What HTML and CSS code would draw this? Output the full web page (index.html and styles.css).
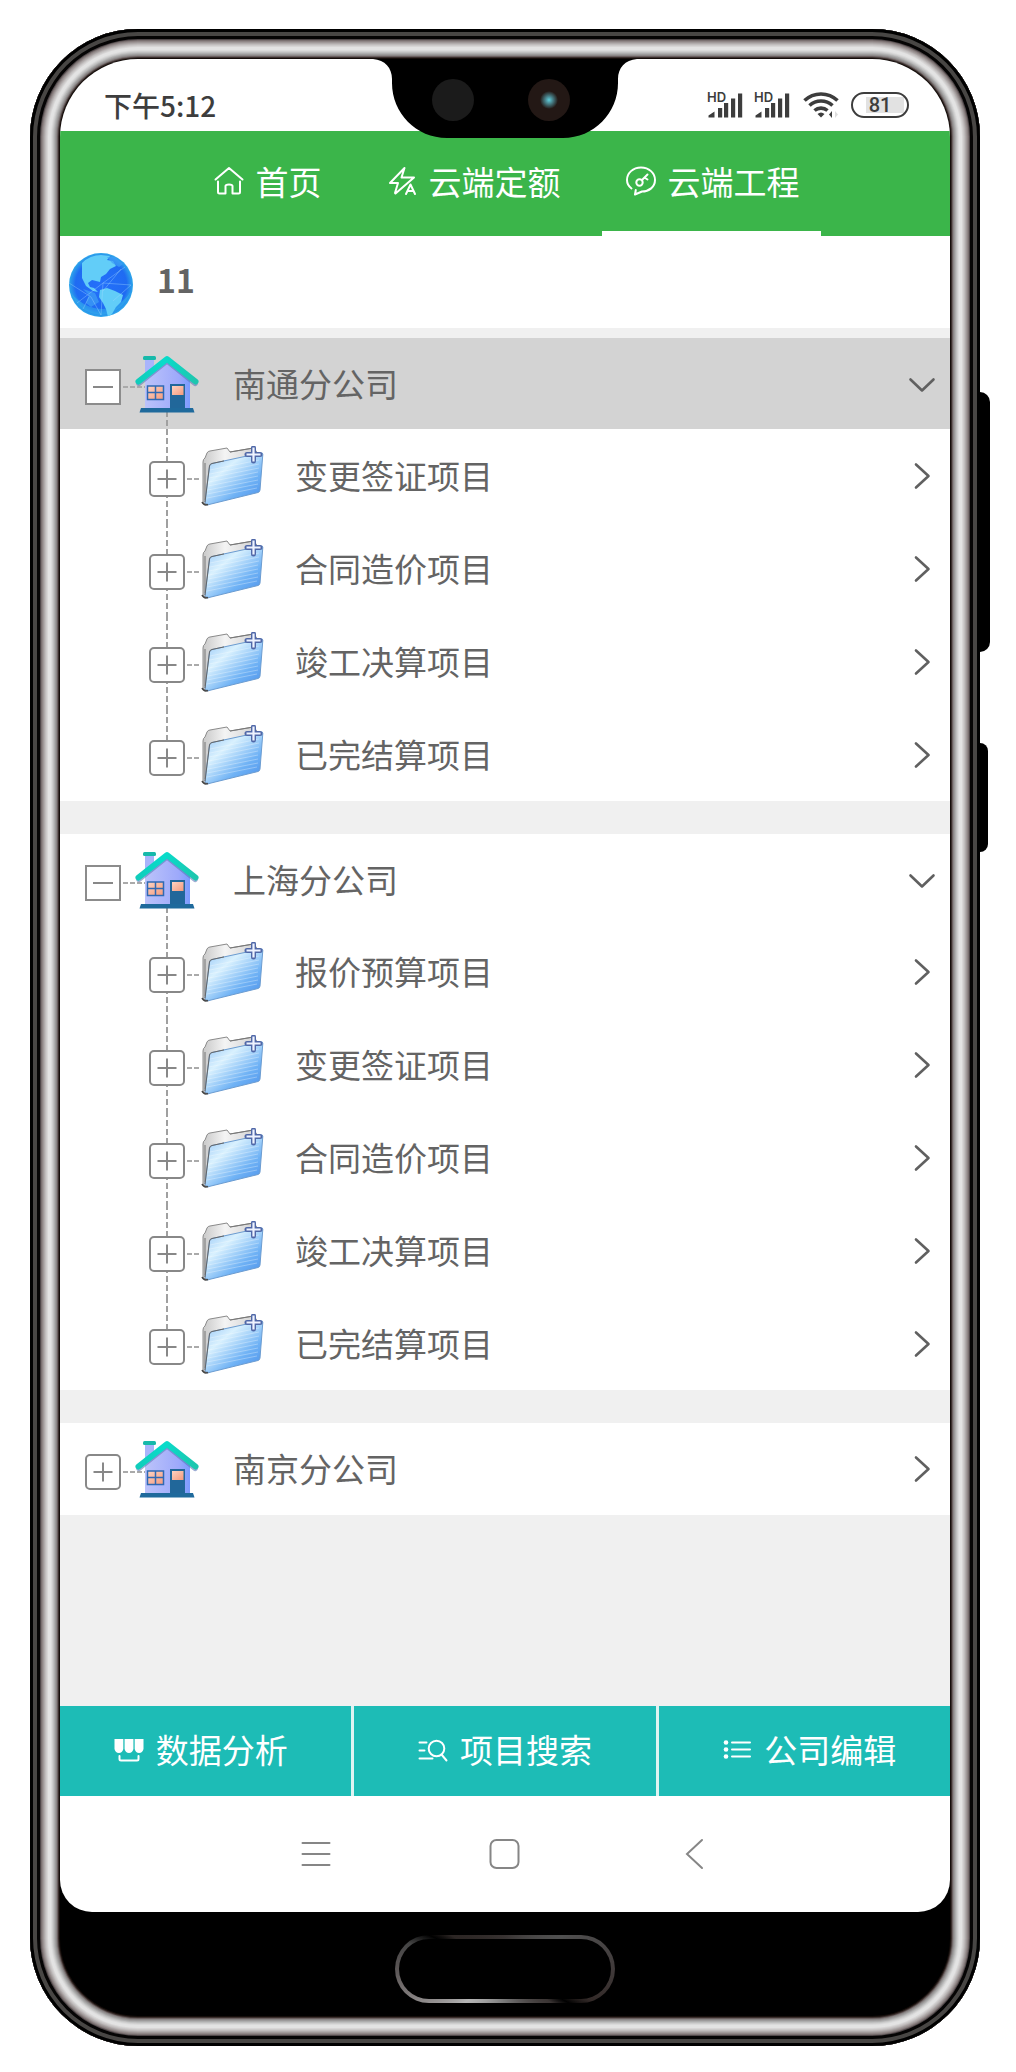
FILE: index.html
```html
<!DOCTYPE html>
<html lang="zh-CN">
<head>
<meta charset="utf-8">
<meta name="viewport" content="width=device-width, initial-scale=1">
<title>云端工程</title>
<link rel="stylesheet" href="styles.css">
</head>
<body>
<svg class="defs" aria-hidden="true">
  <defs>
    <linearGradient id="wall" x1="0" x2="1"><stop offset="0" stop-color="#bcc3fa"/><stop offset=".75" stop-color="#9da9fb"/><stop offset="1" stop-color="#7a9bff"/></linearGradient>
    <linearGradient id="roof" x1="0" x2="1"><stop offset="0" stop-color="#10cdbb"/><stop offset=".45" stop-color="#08dccb"/><stop offset="1" stop-color="#1ec6ae"/></linearGradient>
    <linearGradient id="pane" x1="0" y1="0" x2="1" y2="1"><stop offset="0" stop-color="#fdd3c2"/><stop offset="1" stop-color="#f59a7c"/></linearGradient>
    <linearGradient id="folderFront" x1="0" y1="0" x2=".9" y2="1"><stop offset="0" stop-color="#8ec1f6"/><stop offset=".35" stop-color="#d9f1fe"/><stop offset=".7" stop-color="#6fb2f5"/><stop offset="1" stop-color="#4b90ea"/></linearGradient>
    <linearGradient id="folderBack" x1="0" y1="0" x2="1" y2="0"><stop offset="0" stop-color="#c9c9c9"/><stop offset=".4" stop-color="#f4f4f4"/><stop offset="1" stop-color="#cfcfcf"/></linearGradient>
    <radialGradient id="ocean" cx=".5" cy=".5" r=".5"><stop offset="0" stop-color="#2470fb"/><stop offset=".8" stop-color="#1f6bf2"/><stop offset="1" stop-color="#2ea7ea"/></radialGradient>
    <radialGradient id="lens"><stop offset="0" stop-color="#5fd0dc"/><stop offset=".35" stop-color="#4c8d97"/><stop offset="1" stop-color="#231815"/></radialGradient>
    <clipPath id="globeClip"><circle cx="32" cy="32" r="32"/></clipPath>
  </defs>
  <symbol id="i-plus" viewBox="0 0 36 36"><rect x="1" y="1" width="34" height="34" rx="4" fill="#fff" stroke="#888" stroke-width="2"/><path d="M8.500 18h19M18 8.500v19" stroke="#888" stroke-width="2" fill="none"/></symbol>
  <symbol id="i-minus" viewBox="0 0 36 36"><rect x="1" y="1" width="34" height="34" fill="#fff" stroke="#8c8c8c" stroke-width="2"/><path d="M8 18h20" stroke="#888" stroke-width="2" fill="none"/></symbol>
  <symbol id="i-house" viewBox="0 0 64 58">
    <rect x="10" y="3" width="9" height="16" fill="#a9b4fb"/>
    <path d="M10 25 32 6l23 19v29H10z" fill="url(#wall)"/>
    <rect x="8" y="1" width="13" height="4" rx="1.500" fill="#17b9aa"/>
    <path d="M4 28 32 5.500 60 28" fill="none" stroke="#5f78b8" stroke-width="6" stroke-linecap="round" stroke-linejoin="round" opacity=".6"/>
    <path d="M3.500 26.500 32 4l28.500 22.500" fill="none" stroke="url(#roof)" stroke-width="6" stroke-linecap="round" stroke-linejoin="round"/>
    <rect x="12.500" y="31" width="16" height="13.500" fill="url(#pane)" stroke="#2f69b4" stroke-width="1.500"/>
    <path d="M20.500 31v13.500M12.500 37.500h16" stroke="#2f69b4" stroke-width="1.500"/>
    <rect x="35" y="29" width="15" height="25" fill="#21679a"/>
    <rect x="37" y="31" width="11.500" height="9" fill="url(#pane)"/>
    <path d="M6 53h52l1.500 4.500H4.500z" fill="#1f6a9c"/>
  </symbol>
  <symbol id="i-folder" viewBox="0 0 64 60">
    <path d="M2 57V16q0-3 2-4l2-5q1-2 3-2l17-3 3 4 24-4 4 6-4 35L6 58z" fill="url(#folderBack)" stroke="#8a8a8a" stroke-width="1"/>
    <path d="M4 54V17M29 6l23-4" stroke="#777" stroke-width="1" fill="none"/>
    <path d="M4 56 8.500 20q.4-2 2.500-2.500L60 7q2-.4 1.800 1.500L59 44q-.2 2-2 2.500L6 59z" fill="url(#folderFront)" stroke="#6c9cd0" stroke-width="1"/>
    <path d="M9 24 58 14M9 28 58 18M8 32 58 22M8 36 57 26M7 40 57 30M7 44 57 34M6 48 57 38M6 52 56 42" stroke="#fff" stroke-width="1" opacity=".3" fill="none"/>
    <path d="M4 56 8.500 20q.4-2 2.500-2.500l12-2.600" fill="none" stroke="#666" stroke-width="1"/>
    <path d="M1 56q2 4 6 2.500" fill="none" stroke="#444" stroke-width="1.500"/>
    <path d="M52.500 2v13M46 8.500h13" stroke="#5068a8" stroke-width="5" stroke-linecap="round"/>
    <path d="M52.500 1.500v14M45.500 8.500h14" stroke="#eef3ff" stroke-width="2.200"/>
  </symbol>
  <symbol id="i-right" viewBox="0 0 28 28"><path d="m8 2.500 12.500 11.500L8 25.500" fill="none" stroke="#606060" stroke-width="2.600" stroke-linecap="round" stroke-linejoin="round"/></symbol>
  <symbol id="i-down" viewBox="0 0 28 28"><path d="m2.500 9.500 11.500 11L25.500 9.500" fill="none" stroke="#606060" stroke-width="2.600" stroke-linecap="round" stroke-linejoin="round"/></symbol>
  <symbol id="i-signal" viewBox="0 0 37 26"><path d="M1.500 25.500V23.500l6-4v6zM11 16h4.200v9.500H11zM17 11h4.200v14.500H17zM24 6.500h4.200v19H24zM31 1.500h4.200v24H31z" fill="#3d3d3d"/></symbol>
</svg>

<div class="phone">
  <span class="side-key side-key-volume"></span>
  <span class="side-key side-key-power"></span>
  <div class="screen">
    <div class="status">
      <time class="clock">下午5:12</time>
      <svg class="notch" viewBox="0 0 264 79" aria-hidden="true">
        <path d="M0 0C12 1 19 9 19 20v4c0 30 24 55 55 55h116c31 0 55-25 55-55v-4c0-11 7-19 19-20z" fill="#000"/>
        <circle cx="80" cy="41" r="21" fill="#1b1b1b"/>
        <circle cx="176" cy="41" r="21" fill="#231815"/>
        <circle cx="176" cy="41" r="9" fill="url(#lens)"/>
      </svg>
      <div class="indicators">
        <span class="sim"><b>HD</b><svg><use href="#i-signal"/></svg></span>
        <span class="sim"><b>HD</b><svg><use href="#i-signal"/></svg></span>
        <svg class="wifi" viewBox="0 0 36 28" fill="none" stroke="#3d3d3d" stroke-width="3.600" aria-hidden="true"><path d="M1.500 9.500a24 24 0 0 1 33 0M6.500 14.500a17 17 0 0 1 23 0M11.500 19.500a10 10 0 0 1 13 0"/><path d="M14.500 23q3.500-3 7 0L18 26.500z" fill="#3d3d3d" stroke="none"/><path d="M29 20v7l-3-3.500z" fill="#3d3d3d" stroke="none"/><path d="M32 20v7l3-3.500z" fill="#ddd" stroke="none"/></svg>
        <span class="battery">81</span>
      </div>
    </div>

    <nav class="tabs">
      <a class="tab" href="#home"><svg viewBox="0 0 30 30"><path d="M1.500 13.500 15 2l13.500 11.500M4 15.500V26q0 1.500 1.500 1.500h6V20q0-1.500 3.500-1.500t3.500 1.500v7.500h6q1.500 0 1.500-1.500V15.500"/></svg>首页</a>
      <a class="tab" href="#quota"><svg viewBox="0 0 30 30"><path d="M17.500 2 3 17h8L8 27M17.500 11.500 27 11.500 8.500 27.500M17.500 2 14.500 11.500h3M19 28l4.500-9.500L28 28M21 25h5"/></svg>云端定额</a>
      <a class="tab tab-active" href="#project" aria-current="page"><svg viewBox="0 0 30 30"><path d="M5.500 22.500C2.800 20.500 1 17.500 1 14 1 7 7 1.500 15 1.500S29 7 29 14s-6 11.500-13 11.500l-7 3 .8-4.500"/><circle cx="13.500" cy="16.500" r="3.200"/><path d="m16 14 5.500-5.500M18.500 11.500l3 2"/></svg>云端工程</a>
    </nav>

    <header class="account">
      <svg class="globe" viewBox="0 0 64 64" aria-hidden="true">
        <circle cx="32" cy="32" r="32" fill="url(#ocean)"/>
        <g clip-path="url(#globeClip)">
          <path d="M2 40q8 20 30 22 22-2 30-24-10 16-28 18Q16 56 2 40z" fill="#36b6ec" opacity=".5"/>
          <path d="M13 10q8-8 19-8l9 1-3 4 6 1 3 5-6 3-4 5-5 3-1 5-4-1-4-1-4 3 2 4 4 1 4 4-5-1-7-5-4-8z" fill="#62cdf8"/>
          <path d="M31 37l7-2 8 3 8 4-2 7-5 5-4 7-4 3-2-8-3-6-4-6z" fill="#62cdf8"/>
          <path d="M38 4l8 0 8 7-4 3-7-4zM14 36l6 6-3 8 5 4 8-5-4-9z" fill="#3f9ff5" opacity=".7"/>
          <path d="M0 30 22 44 32 62 34 30 62 32 44 48M8 50l26-20L56 14M34 38l18-22M20 44l-6 12" stroke="#a8dcff" stroke-width=".6" fill="none" opacity=".6"/>
        </g>
      </svg>
      <h1 class="account-name">11</h1>
    </header>

    <main class="tree">
      <section class="company">
        <div class="row row-company row-open row-selected">
          <button class="toggle" aria-label="收起" aria-expanded="true"><svg><use href="#i-minus"/></svg></button><span class="link"></span>
          <svg class="house"><use href="#i-house"/></svg><span class="label">南通分公司</span><svg class="chevron"><use href="#i-down"/></svg>
        </div>
        <ul class="projects">
          <li class="row row-project"><button class="toggle" aria-label="展开" aria-expanded="false"><svg><use href="#i-plus"/></svg></button><span class="link"></span><svg class="folder"><use href="#i-folder"/></svg><span class="label">变更签证项目</span><svg class="chevron"><use href="#i-right"/></svg></li>
          <li class="row row-project"><button class="toggle" aria-label="展开" aria-expanded="false"><svg><use href="#i-plus"/></svg></button><span class="link"></span><svg class="folder"><use href="#i-folder"/></svg><span class="label">合同造价项目</span><svg class="chevron"><use href="#i-right"/></svg></li>
          <li class="row row-project"><button class="toggle" aria-label="展开" aria-expanded="false"><svg><use href="#i-plus"/></svg></button><span class="link"></span><svg class="folder"><use href="#i-folder"/></svg><span class="label">竣工决算项目</span><svg class="chevron"><use href="#i-right"/></svg></li>
          <li class="row row-project"><button class="toggle" aria-label="展开" aria-expanded="false"><svg><use href="#i-plus"/></svg></button><span class="link"></span><svg class="folder"><use href="#i-folder"/></svg><span class="label">已完结算项目</span><svg class="chevron"><use href="#i-right"/></svg></li>
        </ul>
      </section>

      <section class="company">
        <div class="row row-company row-open">
          <button class="toggle" aria-label="收起" aria-expanded="true"><svg><use href="#i-minus"/></svg></button><span class="link"></span>
          <svg class="house"><use href="#i-house"/></svg><span class="label">上海分公司</span><svg class="chevron"><use href="#i-down"/></svg>
        </div>
        <ul class="projects">
          <li class="row row-project"><button class="toggle" aria-label="展开" aria-expanded="false"><svg><use href="#i-plus"/></svg></button><span class="link"></span><svg class="folder"><use href="#i-folder"/></svg><span class="label">报价预算项目</span><svg class="chevron"><use href="#i-right"/></svg></li>
          <li class="row row-project"><button class="toggle" aria-label="展开" aria-expanded="false"><svg><use href="#i-plus"/></svg></button><span class="link"></span><svg class="folder"><use href="#i-folder"/></svg><span class="label">变更签证项目</span><svg class="chevron"><use href="#i-right"/></svg></li>
          <li class="row row-project"><button class="toggle" aria-label="展开" aria-expanded="false"><svg><use href="#i-plus"/></svg></button><span class="link"></span><svg class="folder"><use href="#i-folder"/></svg><span class="label">合同造价项目</span><svg class="chevron"><use href="#i-right"/></svg></li>
          <li class="row row-project"><button class="toggle" aria-label="展开" aria-expanded="false"><svg><use href="#i-plus"/></svg></button><span class="link"></span><svg class="folder"><use href="#i-folder"/></svg><span class="label">竣工决算项目</span><svg class="chevron"><use href="#i-right"/></svg></li>
          <li class="row row-project"><button class="toggle" aria-label="展开" aria-expanded="false"><svg><use href="#i-plus"/></svg></button><span class="link"></span><svg class="folder"><use href="#i-folder"/></svg><span class="label">已完结算项目</span><svg class="chevron"><use href="#i-right"/></svg></li>
        </ul>
      </section>

      <section class="company">
        <div class="row row-company">
          <button class="toggle" aria-label="展开" aria-expanded="false"><svg><use href="#i-plus"/></svg></button><span class="link"></span>
          <svg class="house"><use href="#i-house"/></svg><span class="label">南京分公司</span><svg class="chevron"><use href="#i-right"/></svg>
        </div>
      </section>
    </main>

    <div class="actions">
      <button class="action"><svg viewBox="0 0 30 30"><path d="M.5 5h8.800v10q-1 4-4.400 4T.5 15zM10.600 5h8.800v10q-1 4-4.400 4t-4.400-4zM20.700 5h8.800v10q-1 4-4.400 4t-4.400-4z" fill="#fff" stroke="none"/><path d="M5.500 22v3q0 1.500 1.500 1.500h16q1.500 0 1.500-1.500v-3"/></svg>数据分析</button>
      <button class="action"><svg viewBox="0 0 30 30"><circle cx="18.500" cy="14.500" r="7.800"/><path d="m23.500 20.500 5 6M1.500 8.500h7M1.500 16.500h5M1.500 24.500h13"/></svg>项目搜索</button>
      <button class="action"><svg viewBox="0 0 30 30"><path d="M10 8.500h18M10 15.500h18M10 22.500h18"/><g fill="#fff" stroke="none"><circle cx="4" cy="8.500" r="2.300"/><circle cx="4" cy="15.500" r="2.300"/><circle cx="4" cy="22.500" r="2.300"/></g></svg>公司编辑</button>
    </div>

    <div class="system-nav">
      <button class="system-key" aria-label="菜单"><svg viewBox="0 0 32 32"><path d="M2.500 5h27M2.500 16h27M2.500 27h27"/></svg></button>
      <button class="system-key" aria-label="主页"><svg viewBox="0 0 32 32"><rect x="1.500" y="2" width="28" height="28" rx="6"/></svg></button>
      <button class="system-key" aria-label="返回"><svg viewBox="0 0 32 32"><path d="M24 2 9 16l15 14"/></svg></button>
    </div>
  </div>
  <div class="chin"><button class="home-key" aria-label="主屏幕"></button></div>
</div>
</body>
</html>
```

FILE: styles.css
```css
* { box-sizing: border-box; }

body {
  margin: 0;
  padding: 29px 36px 26px 30px;
  min-height: 100vh;
  display: flex;
  flex-direction: column;
  background: #fff;
  color: #646464;
  font-family: "Noto Sans CJK SC", "Noto Sans", sans-serif;
  font-size: 33px;
  line-height: 48px;
}

button {
  padding: 0;
  border: 0;
  background: none;
  color: inherit;
  font: inherit;
  cursor: pointer;
}

svg { display: block; flex: none; }
.defs { position: absolute; width: 0; height: 0; }

/* Metal frame: concentric rings from the outer edge inwards */
.phone {
  position: relative;
  flex: 1;
  display: flex;
  flex-direction: column;
  padding: 30px;
  border-radius: 108px;
  background: #000;
  box-shadow:
    inset 0 0 0 3px #000,
    inset 0 0 0 7px #484644,
    inset 0 0 0 10px #050404,
    inset 0 0 0 11px #50484a,
    inset 0 0 0 12px #7a7070,
    inset 0 0 0 13px #8f8686,
    inset 0 0 0 14px #a09999,
    inset 0 0 0 15px #b0abab,
    inset 0 0 0 16px #c0bcbc,
    inset 0 0 0 17px #cccaca,
    inset 0 0 0 18px #d8d6d6,
    inset 0 0 0 21px #e3e3e3,
    inset 0 0 0 22px #dadada,
    inset 0 0 0 23px #cdcdcd,
    inset 0 0 0 24px #bebebe,
    inset 0 0 0 25px #adadad,
    inset 0 0 0 26px #9c9a9a,
    inset 0 0 0 27px #8a8686,
    inset 0 0 0 28px #6b6060,
    inset 0 0 0 29px #3a2f2d,
    inset 0 0 0 30px #150d0a;
}

.side-key {
  position: absolute;
  left: 100%;
  background: #000;
}
.side-key-volume { top: 363px; width: 10px; height: 260px; border-radius: 0 10px 10px 0; }
.side-key-power { top: 714px; width: 8px; height: 109px; border-radius: 0 8px 8px 0; }

.screen {
  flex: 1;
  display: flex;
  flex-direction: column;
  overflow: hidden;
  border-radius: 78px 78px 32px 32px;
  background: #fff;
}

/* Status bar */
.status {
  position: relative;
  display: flex;
  justify-content: space-between;
  align-items: center;
  height: 72px;
  padding: 20px 41px 0 44px;
  color: #3d3d3d;
}
.clock { font-size: 28px; line-height: 32px; font-weight: 500; }
.notch {
  position: absolute;
  top: 0;
  left: 0;
  right: 0;
  z-index: 1;
  width: 264px;
  height: 79px;
  margin: 0 auto;
}
.indicators { display: flex; align-items: center; gap: 12px; }
.sim { position: relative; width: 37px; height: 26px; margin-right: -2px; }
.sim svg { width: 37px; height: 26px; }
.sim b {
  position: absolute;
  top: 0;
  left: 0;
  font: 600 13px/10px Inter, "Liberation Sans", sans-serif;
}
.wifi { width: 36px; height: 28px; margin-left: 2px; }
.battery {
  width: 58px;
  height: 26px;
  border: 2px solid #3d3d3d;
  border-radius: 13px;
  background: linear-gradient(#e2e2e2, #e2e2e2) 13px 3px / 38px 16px no-repeat;
  font: 500 20px/22px Roboto, "Liberation Sans", sans-serif;
  text-align: center;
}

/* Top tabs */
.tabs {
  display: flex;
  justify-content: center;
  gap: 20px;
  height: 105px;
  background: #3bb54a;
}
.tab {
  display: flex;
  align-items: center;
  gap: 12px;
  padding: 0 21px 0 24px;
  border-bottom: 5px solid transparent;
  color: #fff;
  text-decoration: none;
}
.tab-active { border-bottom-color: #fff; }
.tab svg, .action svg {
  width: 30px;
  height: 30px;
  fill: none;
  stroke: #fff;
  stroke-width: 2;
  stroke-linecap: round;
  stroke-linejoin: round;
}

/* Account line */
.account {
  display: flex;
  align-items: center;
  gap: 24px;
  height: 92px;
  padding: 6px 9px 0;
}
.globe { width: 64px; height: 64px; }
.account-name { margin: 0 0 12px; font-size: 32px; line-height: 48px; font-weight: 700; }

/* Company tree */
.tree {
  flex: 1;
  display: flex;
  flex-direction: column;
  gap: 33px;
  padding-top: 10px;
  background: #f0f0f0;
}
.company { background: #fff; }
.projects { margin: 0; padding: 0; list-style: none; }
.row { display: flex; align-items: center; padding-right: 14px; }
.row-company { height: 92px; padding-left: 25px; }
.row-open { height: 91px; }
.row-project {
  height: 93px;
  padding-left: 89px;
  background: repeating-linear-gradient(#a0a0a0 0 6px, transparent 6px 9px) 106px 0 / 2px 100% no-repeat;
}
.row-project:last-child { background-size: 2px 50%; }
.row-open { background: repeating-linear-gradient(#a0a0a0 0 6px, transparent 6px 9px) 106px 100% / 2px 18px no-repeat; }
.row-selected { background-color: #d3d3d3; }
.toggle { width: 36px; height: 36px; margin-top: 6px; flex: none; }
.toggle svg { width: 36px; height: 36px; }
.link {
  width: 16px;
  height: 2px;
  margin-top: 6px;
  background: repeating-linear-gradient(90deg, transparent 0 2px, #aaa 2px 7px);
}
.row-company .link { width: 24px; margin-right: -10px; }
.house { width: 64px; height: 58px; }
.folder { width: 64px; height: 60px; }
.label { flex: 1; margin: 0 0 2px 30px; }
.row-company .label { margin-left: 34px; }
.chevron { width: 28px; height: 28px; }

/* Bottom actions: three equal cells bleeding past the screen edges */
.actions {
  display: grid;
  grid-template-columns: repeat(3, 1fr);
  gap: 3px;
  height: 90px;
  margin: 0 -10px;
  background: #dff3f2;
}
.action {
  display: flex;
  align-items: center;
  justify-content: center;
  gap: 12px;
  padding-bottom: 4px;
  background: #1dbcb6;
  color: #fff;
}

/* System navigation */
.system-nav {
  display: flex;
  align-items: center;
  justify-content: center;
  gap: 157px;
  height: 116px;
}
.system-key svg {
  width: 32px;
  height: 32px;
  fill: none;
  stroke: #868686;
  stroke-width: 2;
  stroke-linecap: round;
}

.chin {
  display: flex;
  align-items: center;
  justify-content: center;
  height: 104px;
}
.home-key {
  width: 220px;
  height: 68px;
  margin-top: 10px;
  border: 4px solid transparent;
  border-radius: 34px;
  background:
    linear-gradient(#000, #000) padding-box,
    conic-gradient(#383332 0deg, #505050 60deg, #403a3a 90deg, #332a28 110deg, #000 118deg, #3a3433 126deg, #777 180deg, #b5b5b5 230deg, #8a8686 250deg, #5a5555 270deg, #444 285deg, #000 294deg, #2c2624 302deg, #383332 360deg) border-box;
}
```
